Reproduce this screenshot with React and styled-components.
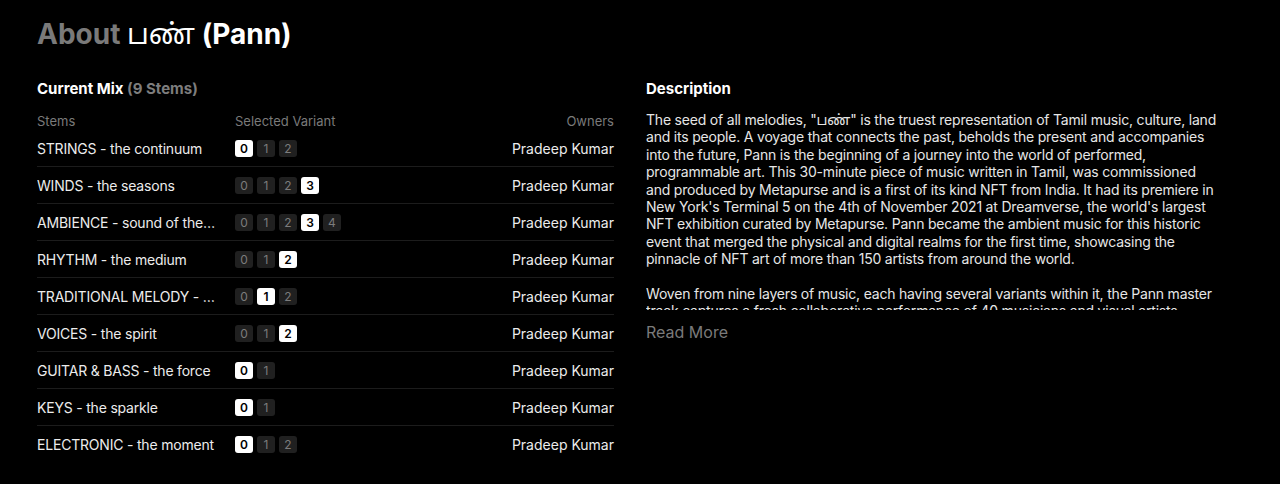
import React from "react";
import styled, { createGlobalStyle } from "styled-components";

const GlobalStyle = createGlobalStyle`
  html, body {
    margin: 0;
    background: #000;
  }
  body {
    font-family: Inter, "Noto Sans", "Noto Sans Tamil", sans-serif;
    color: #f2f2f2;
  }
`;

const Page = styled.div`
  padding: 17px 37px 20px;
  height: 484px;
  box-sizing: border-box;
  overflow: hidden;
`;

const Title = styled.h1`
  margin: 0 0 28px;
  font-size: 28px;
  line-height: 34px;
  font-weight: 700;
  color: #fff;
`;

const Muted = styled.span`
  color: #7a7a7a;
`;

const Tamil = styled.span`
  font-weight: 400;
`;

const Columns = styled.div`
  display: grid;
  grid-template-columns: 577px 577px;
  column-gap: 32px;
`;

const SectionTitle = styled.h2`
  margin: 0 0 12px;
  font-size: 15px;
  line-height: 20px;
  font-weight: 700;
  color: #fff;
  span {
    color: #7d7d7d;
  }
`;

const Table = styled.div`
  display: flex;
  flex-direction: column;
`;

const Row = styled.div`
  display: grid;
  grid-template-columns: 198px 1fr auto;
  align-items: center;
  height: ${(p) => (p.$head ? "19px" : "36px")};
  border-bottom: ${(p) => (p.$head || p.$last ? "none" : "1px solid #1c1c1c")};
  font-size: ${(p) => (p.$head ? "13px" : "14px")};
  color: ${(p) => (p.$head ? "#7a7a7a" : "#ececec")};
`;

const StemName = styled.div`
  max-width: 181px;
  white-space: nowrap;
  overflow: hidden;
  text-overflow: ellipsis;
  letter-spacing: -0.2px;
`;

const Variants = styled.div`
  display: flex;
  gap: 4px;
`;

const Badge = styled.span`
  width: 18px;
  height: 17px;
  border-radius: 3px;
  display: inline-flex;
  align-items: center;
  justify-content: center;
  font-size: 12px;
  font-weight: ${(p) => (p.$on ? 600 : 400)};
  background: ${(p) => (p.$on ? "#fff" : "#202020")};
  color: ${(p) => (p.$on ? "#000" : "#7c7c7c")};
`;

const Owner = styled.div`
  text-align: right;
  white-space: nowrap;
`;

const Body = styled.div`
  max-height: 199px;
  overflow: hidden;
  font-size: 14px;
  line-height: 17.4px;
  letter-spacing: -0.2px;
  color: #e6e6e6;
  p {
    margin: 0 0 17.4px;
  }
`;

const ReadMore = styled.button`
  margin-top: 12px;
  padding: 0;
  border: none;
  background: none;
  font-family: inherit;
  font-size: 16px;
  line-height: 20px;
  color: #7a7a7a;
  cursor: pointer;
`;

const stems = [
  { name: "STRINGS - the continuum", count: 3, sel: 0 },
  { name: "WINDS - the seasons", count: 4, sel: 3 },
  { name: "AMBIENCE - sound of the earth", count: 5, sel: 3 },
  { name: "RHYTHM - the medium", count: 3, sel: 2 },
  { name: "TRADITIONAL MELODY - the roots", count: 3, sel: 1 },
  { name: "VOICES - the spirit", count: 3, sel: 2 },
  { name: "GUITAR & BASS - the force", count: 2, sel: 0 },
  { name: "KEYS - the sparkle", count: 2, sel: 0 },
  { name: "ELECTRONIC - the moment", count: 3, sel: 0 },
];

export default function App() {
  return (
    <Page>
      <GlobalStyle />
      <Title>
        <Muted>About</Muted> <Tamil>பண்</Tamil> (Pann)
      </Title>
      <Columns>
        <div>
          <SectionTitle>
            Current Mix <span>(9 Stems)</span>
          </SectionTitle>
          <Table>
            <Row $head>
              <div>Stems</div>
              <div>Selected Variant</div>
              <Owner>Owners</Owner>
            </Row>
            {stems.map((s, i) => (
              <Row key={s.name} $last={i === stems.length - 1}>
                <StemName>{s.name}</StemName>
                <Variants>
                  {Array.from({ length: s.count }).map((_, n) => (
                    <Badge key={n} $on={n === s.sel}>
                      {n}
                    </Badge>
                  ))}
                </Variants>
                <Owner>Pradeep Kumar</Owner>
              </Row>
            ))}
          </Table>
        </div>
        <div>
          <SectionTitle>Description</SectionTitle>
          <Body>
            <p>
              The seed of all melodies, "பண்" is the truest representation of
              Tamil music, culture, land and its people. A voyage that connects
              the past, beholds the present and accompanies into the future,
              Pann is the beginning of a journey into the world of performed,
              programmable art. This 30-minute piece of music written in Tamil,
              was commissioned and produced by Metapurse and is a first of its
              kind NFT from India. It had its premiere in New York's Terminal 5
              on the 4th of November 2021 at Dreamverse, the world's largest NFT
              exhibition curated by Metapurse. Pann became the ambient music for
              this historic event that merged the physical and digital realms
              for the first time, showcasing the pinnacle of NFT art of more
              than 150 artists from around the world.
            </p>
            <p>
              Woven from nine layers of music, each having several variants
              within it, the Pann master track captures a fresh collaborative
              performance of 40 musicians and visual artists, brought together
              to create an experience unlike any other.
            </p>
          </Body>
          <ReadMore>Read More</ReadMore>
        </div>
      </Columns>
    </Page>
  );
}
